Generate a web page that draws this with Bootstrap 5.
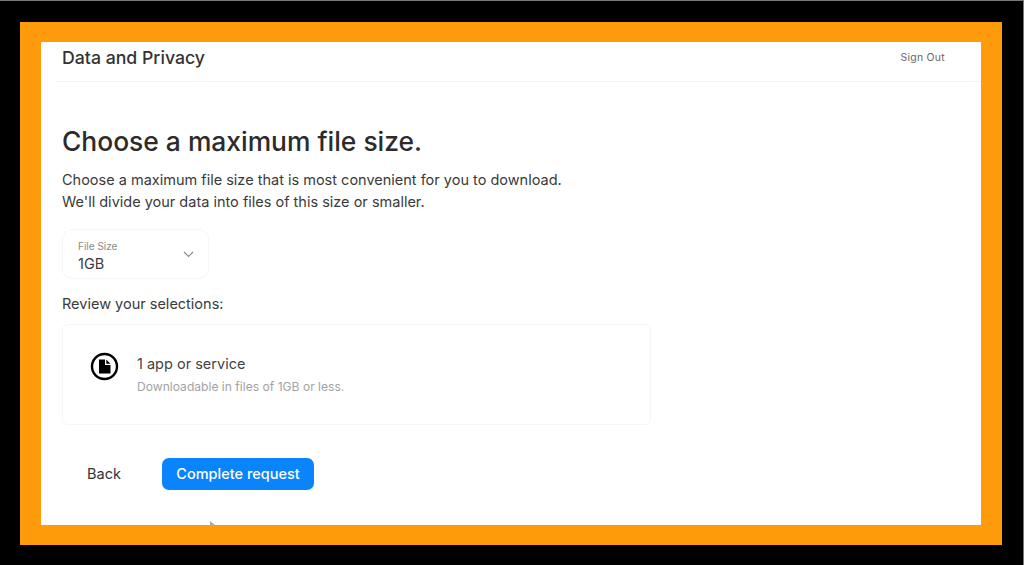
<!DOCTYPE html>
<html lang="en">

<head>
    <meta charset="UTF-8">
    <meta name="viewport" content="width=device-width, initial-scale=1.0">
    <title>Data and Privacy</title>
    <link rel="stylesheet" href="https://cdn.jsdelivr.net/npm/bootstrap@5.3.3/dist/css/bootstrap.min.css">
    <script src="https://cdn.jsdelivr.net/npm/bootstrap@5.3.3/dist/js/bootstrap.bundle.min.js"></script>
    <style>
        html, body { height: 100%; overflow: hidden; }
        body { font-family: Inter, "Liberation Sans", sans-serif; background: #000; color: #333; }
        .frame-black { height: 565px; padding: 21px 21px 20px 20px; border-top: 1px solid #777; border-right: 1px solid #777; }
        .frame-orange { height: 523px; padding: 20px 21px; background: #fd9b0b; }
        .panel { height: 483px; background: #fff; padding-left: 21px; overflow: hidden; }
        .topbar { height: 40px; margin-left: -6px; padding: 0 36px 6px 6px; border-bottom: 1px solid #f4f4f4; }
        .brand { font-size: 17.7px; font-weight: 500; color: #333; }
        .signout { font-size: 10.4px; letter-spacing: .3px; color: #666; margin-bottom: 1px; }
        .heading { font-size: 26.4px; font-weight: 500; line-height: 36px; margin: 41px 0 0; color: #2b2b2b; }
        .intro { font-size: 14.5px; line-height: 22px; margin: 10px 0 0; color: #3a3a3a; }
        .size-box { width: 147px; height: 50px; margin-top: 16px; padding: 0 14px 0 15px; border: 1px solid #f6f6f6; border-radius: 10px; }
        .size-label { font-size: 10px; line-height: 12px; margin-top: 5px; color: #8a8a8a; }
        .size-value { font-size: 14.5px; line-height: 19px; margin-top: 2px; color: #3a3a3a; }
        .review { font-size: 14.5px; line-height: 20px; margin: 15px 0 0; color: #3a3a3a; }
        .review-box { width: 589px; height: 101px; margin-top: 10px; padding-left: 27px; border: 1px solid #f6f6f6; border-radius: 6px; }
        .file-icon { margin-bottom: 16px; margin-right: 2px; }
        .item-title { font-size: 14.5px; line-height: 20px; color: #444; }
        .item-sub { font-size: 12.1px; line-height: 16px; margin-top: 5px; color: #a3a3a3; }
        .actions { margin-top: 33px; }
        .back-btn { width: 84px; padding: 0; margin-right: 16px; font-size: 14.5px; color: #333; border: 0; }
        .done-btn { width: 152px; height: 32px; padding: 0; font-size: 14.5px; font-weight: 500; color: #fff; background: #0a84fb; border: 0; border-radius: 7px; }
        .pointer-tip { position: absolute; left: 210px; top: 521px; }
    </style>
</head>

<body>
    <div class="frame-black">
        <div class="frame-orange">
            <div class="panel">
                <header class="topbar d-flex justify-content-between align-items-center">
                    <span class="brand">Data and Privacy</span>
                    <a class="signout text-decoration-none" href="#">Sign Out</a>
                </header>

                <h1 class="heading">Choose a maximum file size.</h1>
                <p class="intro">Choose a maximum file size that is most convenient for you to download.<br>We'll divide your data into files of this size or smaller.</p>

                <div class="size-box d-flex justify-content-between align-items-center">
                    <div>
                        <div class="size-label">File Size</div>
                        <div class="size-value">1GB</div>
                    </div>
                    <svg width="11" height="7" viewBox="0 0 11 7" fill="none" stroke="#888" stroke-width="1.1">
                        <path d="M1 1l4.5 4.5L10 1"/>
                    </svg>
                </div>

                <p class="review">Review your selections:</p>

                <div class="review-box d-flex align-items-center gap-3">
                    <svg class="file-icon" width="29" height="29" viewBox="0 0 29 29">
                        <circle cx="14.5" cy="14.5" r="12.5" fill="none" stroke="#000" stroke-width="2.4"/>
                        <path d="M9 7.5h6v5.5h5.5v8.5H9z M16.3 7.5l4.2 4.2h-4.2z" fill="#000"/>
                    </svg>
                    <div>
                        <div class="item-title">1 app or service</div>
                        <div class="item-sub">Downloadable in files of 1GB or less.</div>
                    </div>
                </div>

                <div class="actions d-flex align-items-center">
                    <button class="btn back-btn" type="button">Back</button>
                    <button class="btn done-btn" type="button">Complete request</button>
                </div>
            </div>
        </div>
    </div>
    <svg class="pointer-tip" width="6" height="5" viewBox="0 0 6 5"><path d="M0 0l5 4H0z" fill="#aaa"/></svg>
</body>

</html>
